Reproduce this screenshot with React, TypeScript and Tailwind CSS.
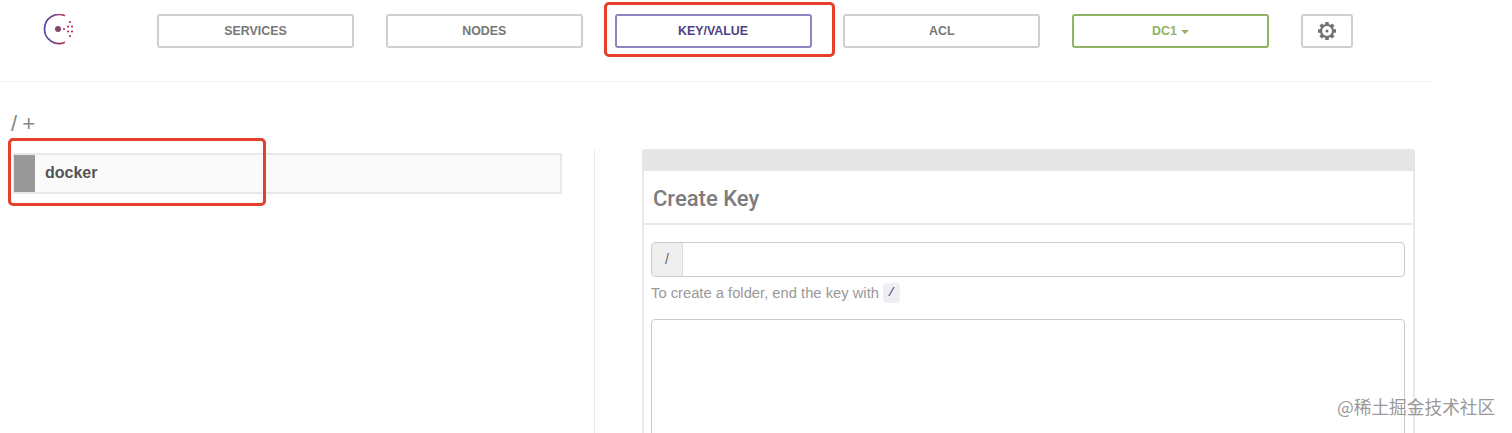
import React from 'react';

const NAV = [
    { label: 'SERVICES', cls: 'border-[#cfcfcf] text-[#777]' },
    { label: 'NODES', cls: 'border-[#cfcfcf] text-[#777]' },
    { label: 'KEY/VALUE', cls: 'border-[#9084c0] text-[#4f4285]' },
    { label: 'ACL', cls: 'border-[#cfcfcf] text-[#777]' },
];

function Logo() {
    return (
        <svg width="34" height="34" viewBox="0 0 34 34" className="shrink-0">
            <defs>
                <linearGradient id="arc" x1="0" y1="0.5" x2="1" y2="0.5">
                    <stop offset="0" stopColor="#4f4da0" />
                    <stop offset="0.6" stopColor="#8a3f78" />
                    <stop offset="1" stopColor="#b5344f" />
                </linearGradient>
            </defs>
            <path d="M22 1.8A14.5 14.5 0 1 0 22 28.2" fill="none" stroke="url(#arc)" strokeWidth="1.7" />
            <circle cx="15" cy="15" r="3" fill="#86456f" />
            <circle cx="21" cy="15" r="1.1" fill="#a23c62" />
            <circle cx="27" cy="8" r="1.1" fill="#b5344f" />
            <circle cx="25" cy="12.5" r="1.1" fill="#b5344f" />
            <circle cx="25" cy="17.5" r="1.1" fill="#b5344f" />
            <circle cx="27" cy="22" r="1.1" fill="#b5344f" />
            <circle cx="29" cy="12.5" r="1.1" fill="#b5344f" />
            <circle cx="29" cy="17.5" r="1.1" fill="#b5344f" />
        </svg>
    );
}

function Gear() {
    const teeth = [0, 45, 90, 135, 180, 225, 270, 315];
    return (
        <svg width="20" height="20" viewBox="0 0 20 20">
            {teeth.map((a) => (
                <rect key={a} x="8.25" y="1" width="3.5" height="3.5" fill="#707070" transform={`rotate(${a} 10 10)`} />
            ))}
            <circle cx="10" cy="10" r="6" fill="none" stroke="#707070" strokeWidth="2.2" />
            <circle cx="10" cy="10" r="1.5" fill="#707070" />
        </svg>
    );
}

export default function App() {
    return (
        <div className="relative h-[433px] w-[1512px] overflow-hidden bg-white font-['Liberation_Sans',Arial,sans-serif]">
            <header className="flex h-[82px] w-[1432px] items-start border-b border-[#f3f3f3] pt-[14px] pl-[43px]">
                <div className="mr-[80px] flex h-[34px] items-center">
                    <Logo />
                </div>
                <nav className="flex gap-[31.75px]">
                    {NAV.map((n) => (
                        <a
                            key={n.label}
                            className={`flex h-[34px] w-[197px] items-center justify-center rounded-[3px] border-2 text-[12.4px] font-bold ${n.cls}`}
                        >
                            {n.label}
                        </a>
                    ))}
                    <a className="flex h-[34px] w-[197px] items-center justify-center gap-[4px] rounded-[3px] border-2 border-[#8fb264] text-[12.4px] font-bold text-[#8fb264]">
                        DC1
                        <span className="mt-[1px] h-0 w-0 border-x-[4px] border-t-[4px] border-x-transparent border-t-[#8fb264]" />
                    </a>
                    <a className="flex h-[34px] w-[52px] items-center justify-center rounded-[3px] border-2 border-[#cfcfcf]">
                        <Gear />
                    </a>
                </nav>
            </header>

            <main className="flex items-start">
                <section className="w-[594px] shrink-0 pt-[31px] pl-[11px]">
                    <div className="flex h-[40px] gap-[5px] text-[22px] leading-[22px] text-[#888]">
                        <span>/</span>
                        <span>+</span>
                    </div>
                    <div className="ml-[2px] flex h-[41px] w-[549px] items-stretch border-2 border-[#e8e8e8] bg-[#fafafa]">
                        <div className="-ml-px w-[21px] bg-[#999]" />
                        <div className="flex items-center pb-px pl-[10px] text-[16px] font-bold text-[#555]">docker</div>
                    </div>
                </section>

                <div className="mt-[68px] h-[300px] w-px shrink-0 bg-[#e8e8e8]" />

                <section className="mt-[67px] ml-[47px] w-[773px] shrink-0 rounded-t-[3px] border-x-2 border-[#e8e8e8]">
                    <div className="-mx-[2px] h-[22px] rounded-t-[4px] bg-[#e6e6e6]" />
                    <h2 className="flex h-[54px] items-center border-b-2 border-[#e8e8e8] pt-[3px] pl-[9px] font-['Roboto',sans-serif] text-[22px] font-medium text-[#7c7c7c]">
                        Create Key
                    </h2>
                    <div className="pt-[17px] pr-[8px] pl-[7px]">
                        <div className="flex h-[35px] overflow-hidden rounded-[4px] border border-[#ccc]">
                            <span className="flex w-[31px] items-center justify-center border-r border-[#ddd] bg-[#eee] text-[14px] text-[#666]">/</span>
                            <div className="flex-1" />
                        </div>
                        <p className="mt-[6px] flex h-[20px] items-center gap-[4px] text-[14.75px] text-[#999]">
                            To create a folder, end the key with
                            <code className="flex h-[20px] w-[17px] items-center justify-center rounded-[4px] bg-[#eeeef3] font-['Liberation_Mono',monospace] text-[13px] text-[#444a80]">/</code>
                        </p>
                        <div className="mt-[16px] h-[200px] rounded-[4px] border border-[#ccc]" />
                    </div>
                </section>
            </main>

            <div className="absolute top-[2px] left-[604px] h-[55px] w-[231px] rounded-[5px] border-[3px] border-[#e5402a]" />
            <div className="absolute top-[138px] left-[8px] h-[68px] w-[258px] rounded-[5px] border-[3px] border-[#e5402a]" />
            <div className="absolute top-[396px] left-[1337px] text-[17.7px] leading-[20px] text-[#999] font-['Noto_Sans_CJK_SC','Liberation_Sans',sans-serif]">
                @稀土掘金技术社区
            </div>
        </div>
    );
}
